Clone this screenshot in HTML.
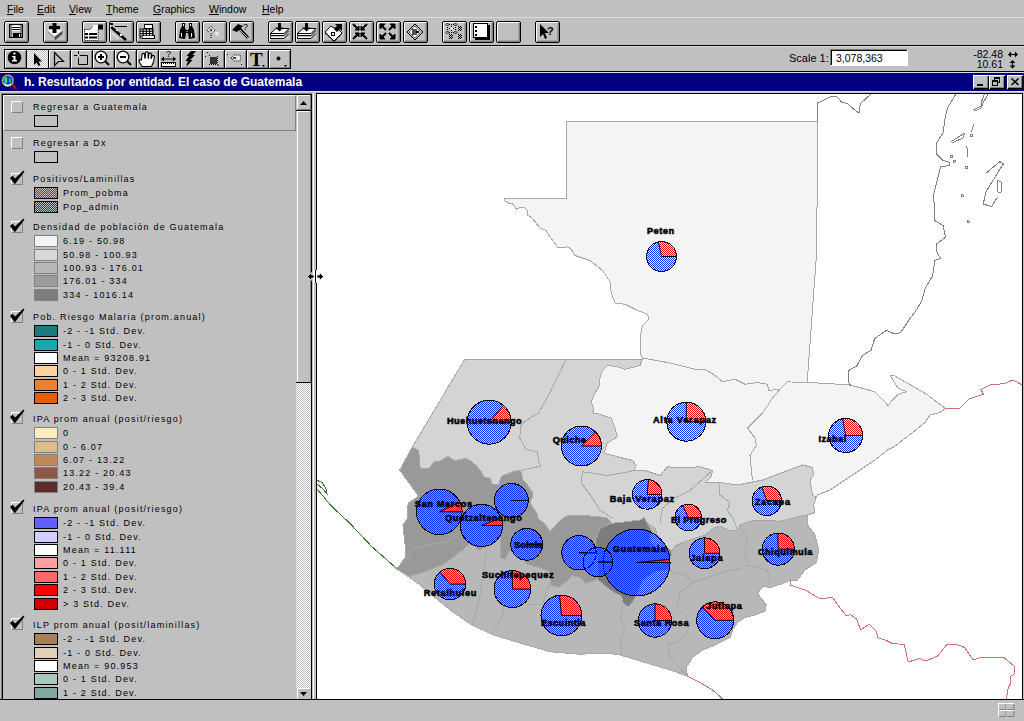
<!DOCTYPE html><html><head><meta charset='utf-8'><style>
*{margin:0;padding:0;box-sizing:border-box}
html,body{width:1024px;height:721px;overflow:hidden;background:#c0c0c0;font-family:"Liberation Sans",sans-serif;position:relative}
.a{position:absolute}
.mi{position:absolute;top:3px;font-size:10.5px;color:#000;white-space:nowrap}
.mi u{text-decoration:underline}
.b1{position:absolute;top:21px;width:25px;height:22px;border:1px solid #000;border-radius:2px;background:#c0c0c0;box-shadow:inset 1px 1px 0 #fff,inset -1px -1px 0 #808080,inset -2px -2px 0 #a0a0a0}
.b2{position:absolute;top:49px;width:23px;height:20px;border:1px solid #000;background:#c0c0c0;box-shadow:inset 1px 1px 0 #fff,inset -1px -1px 0 #808080}
.lt{position:absolute;font-size:9px;letter-spacing:1.2px;white-space:nowrap;color:#000;line-height:12px}
.sw{position:absolute;left:34px;width:25px;height:12px;border:1px solid #000}
.cb{position:absolute;left:11px;width:12px;height:12px;background:#c0c0c0;box-shadow:inset 1px 1px 0 #fff,inset -1px -1px 0 #808080}
</style></head><body><div class='mi' style='left:7px'><u>F</u>ile</div><div class='mi' style='left:37px'><u>E</u>dit</div><div class='mi' style='left:69px'><u>V</u>iew</div><div class='mi' style='left:106px'><u>T</u>heme</div><div class='mi' style='left:153px'><u>G</u>raphics</div><div class='mi' style='left:209px'><u>W</u>indow</div><div class='mi' style='left:262px'><u>H</u>elp</div><div class='a' style='left:0;top:17px;width:1024px;height:1px;background:#dcdcdc'></div><div class='a' style='left:0;top:45px;width:1024px;height:1px;background:#000'></div><div class='a' style='left:0;top:46px;width:1024px;height:1px;background:#dcdcdc'></div><div class='a' style='left:0;top:71px;width:1024px;height:1px;background:#000'></div><div class='a' style='left:0;top:72px;width:1024px;height:1px;background:#dcdcdc'></div><div class='b1' style='left:4px'></div><div class='b1' style='left:43px'></div><div class='b1' style='left:82px'></div><div class='b1' style='left:109px'></div><div class='b1' style='left:136px'></div><div class='b1' style='left:175px'></div><div class='b1' style='left:202px'></div><div class='b1' style='left:229px'></div><div class='b1' style='left:268px'></div><div class='b1' style='left:295px'></div><div class='b1' style='left:322px'></div><div class='b1' style='left:349px'></div><div class='b1' style='left:376px'></div><div class='b1' style='left:403px'></div><div class='b1' style='left:442px'></div><div class='b1' style='left:469px'></div><div class='b1' style='left:496px'></div><div class='b1' style='left:535px'></div><div class='b2' style='left:4px'></div><div class='b2' style='left:26px'></div><div class='b2' style='left:48px'></div><div class='b2' style='left:70px'></div><div class='b2' style='left:92px'></div><div class='b2' style='left:114px'></div><div class='b2' style='left:136px'></div><div class='b2' style='left:158px'></div><div class='b2' style='left:180px'></div><div class='b2' style='left:202px'></div><div class='b2' style='left:224px'></div><div class='b2' style='left:246px'></div><div class='b2' style='left:268px'></div><svg class='a' style='left:0;top:0' width='1024' height='72'><g transform='translate(4,21)'><rect x='5.5' y='3.5' width='13' height='13' fill='#c0c0c0' stroke='#000'/><rect x='6' y='4' width='2' height='12' fill='#808080'/><rect x='16' y='4' width='2' height='12' fill='#808080'/><rect x='8' y='4' width='8' height='6' fill='#fff'/><rect x='8' y='6' width='8' height='1' fill='#000'/><rect x='8' y='8' width='8' height='1' fill='#000'/><rect x='9' y='12' width='8' height='5' fill='#000'/><rect x='15' y='13' width='1' height='3' fill='#fff'/><rect x='5' y='10' width='1' height='1' fill='#000'/></g><g transform='translate(43,21)'><polygon points='4.5,9 19.5,9 19.5,12 12,19 4.5,12' fill='#a8a8a8'/><polygon points='4.5,9 19.5,9 11.5,15.5' fill='#fff'/><polygon points='19.5,10 19.5,13 12,19.5 11.5,16' fill='#505050'/><rect x='9.5' y='2' width='4' height='10' fill='#000'/><rect x='6' y='5' width='11' height='3' fill='#000'/></g><g transform='translate(82,21)'><polygon points='2.5,8.5 8,8.5 11.5,4.5 16,4.5 16,19.5 2.5,19.5' fill='#fff' stroke='#000' stroke-dasharray='1,1'/><rect x='16' y='3.5' width='5' height='5' fill='#000'/><rect x='11' y='4' width='5' height='4' fill='#fff'/><rect x='3' y='12' width='12' height='2' fill='#000'/><rect x='3' y='15.5' width='12' height='2' fill='#000'/><rect x='6' y='11' width='1' height='8' fill='#fff'/></g><g transform='translate(109,21)'><rect x='1' y='2' width='3' height='2' fill='#000'/><line x1='6' y1='5.5' x2='18' y2='5.5' stroke='#000' stroke-width='1'/><line x1='2' y1='6' x2='17' y2='19' stroke='#000' stroke-width='2.6'/><line x1='3' y1='12' x2='9' y2='18' stroke='#fff' stroke-width='1'/><rect x='7' y='9' width='2' height='1' fill='#fff'/><rect x='11' y='13' width='2' height='2' fill='#fff'/></g><g transform='translate(136,21)'><rect x='8.5' y='3.5' width='8' height='4' fill='#fff' stroke='#000'/><rect x='3.5' y='7.5' width='14' height='10' fill='#000'/><rect x='6.5' y='14.5' width='12' height='3' fill='#fff' stroke='#000'/><rect x='4.5' y='8.5' width='2' height='1.2' fill='#fff'/><rect x='7.7' y='8.5' width='2' height='1.2' fill='#fff'/><rect x='10.9' y='8.5' width='2' height='1.2' fill='#fff'/><rect x='14.1' y='8.5' width='2' height='1.2' fill='#fff'/><rect x='4.5' y='10.8' width='2' height='1.2' fill='#fff'/><rect x='7.7' y='10.8' width='2' height='1.2' fill='#fff'/><rect x='10.9' y='10.8' width='2' height='1.2' fill='#fff'/><rect x='14.1' y='10.8' width='2' height='1.2' fill='#fff'/><rect x='4.5' y='13.1' width='2' height='1.2' fill='#fff'/><rect x='7.7' y='13.1' width='2' height='1.2' fill='#fff'/><rect x='10.9' y='13.1' width='2' height='1.2' fill='#fff'/><rect x='14.1' y='13.1' width='2' height='1.2' fill='#fff'/><rect x='4.5' y='15.4' width='2' height='1.2' fill='#fff'/><rect x='7.7' y='15.4' width='2' height='1.2' fill='#fff'/><rect x='10.9' y='15.4' width='2' height='1.2' fill='#fff'/><rect x='14.1' y='15.4' width='2' height='1.2' fill='#fff'/></g><g transform='translate(175,21)'><path d='M4,17 L5,9 L7,5 L7,2 L10,2 L10,7 L11,9 L13,9 L14,7 L14,2 L17,2 L17,5 L19,9 L20,17 L14,18 L13,12 L11,12 L10,18 Z' fill='#000'/><rect x='6' y='12' width='1' height='4' fill='#fff'/><rect x='16' y='12' width='1' height='4' fill='#fff'/><rect x='8' y='3' width='1' height='2' fill='#fff'/><rect x='15' y='3' width='1' height='2' fill='#fff'/><rect x='11.5' y='10' width='1' height='1' fill='#fff'/></g><g transform='translate(202,21)'><polygon points='9,5 13,9 9,13 5,9' fill='#fff' stroke='#000' stroke-dasharray='1,1'/><rect x='7.5' y='7.5' width='3' height='3' fill='#606060'/><rect x='8.5' y='14' width='1' height='1' fill='#000'/><rect x='8.5' y='16' width='1' height='1' fill='#000'/><polygon points='15,10 17.5,12.5 15,15 12.5,12.5' fill='#e8e8e8'/></g><g transform='translate(229,21)'><path d='M3,9 L9,3 L14,5 L12,7 L20,16 L18,18 L10,9 L8,11 Z' fill='#000'/><line x1='11' y1='9' x2='19' y2='17' stroke='#fff' stroke-width='0.8'/><text x='14' y='9' font-family='Liberation Sans' font-size='9' fill='#000'>?</text></g><g transform='translate(268,21)'><polygon points='2.5,12.5 8,7.5 21,7.5 16,12.5' fill='#fff' stroke='#000'/><polyline points='2.5,12.5 2.5,14.5 16,14.5 21,9.5' fill='none' stroke='#000'/><polyline points='2.5,15.5 2.5,17.5 16,17.5 21,12.5' fill='none' stroke='#000'/><rect x='3' y='13' width='13' height='1' fill='#fff'/><rect x='3' y='16' width='13' height='1' fill='#fff'/><rect x='10' y='2' width='3' height='5' fill='#000'/><polygon points='7.5,6.5 15.5,6.5 11.5,10.5' fill='#000'/></g><g transform='translate(295,21)'><polygon points='2.5,12.5 8,7.5 21,7.5 16,12.5' fill='#fff' stroke='#000'/><polyline points='2.5,12.5 2.5,14.5 16,14.5 21,9.5' fill='none' stroke='#000'/><polyline points='2.5,15.5 2.5,17.5 16,17.5 21,12.5' fill='none' stroke='#000'/><rect x='3' y='13' width='13' height='1' fill='#fff'/><rect x='3' y='16' width='13' height='1' fill='#fff'/><rect x='10' y='2' width='3' height='5' fill='#000'/><polygon points='7.5,6.5 15.5,6.5 11.5,10.5' fill='#000'/></g><g transform='translate(322,21)'><polygon points='3,11 9,5 12,7 15,7 20,12 12,20' fill='#fff' stroke='#000'/><polyline points='3,12 12,21 20,13' fill='none' stroke='#000' stroke-dasharray='1,1'/><polygon points='13,3 20,3 20,10 18,8 15,11 12,8 15,5' fill='#000'/><rect x='9' y='11' width='4' height='4' fill='#000'/><rect x='10' y='12' width='2' height='2' fill='#fff'/></g><g transform='translate(349,21)'><path d='M4,3 L10,9 M18,3 L12,9 M4,18 L10,12 M18,18 L12,12' stroke='#000' stroke-width='2'/><path d='M6,9 L10,9 L10,5 Z M16,9 L12,9 L12,5 Z M6,12 L10,12 L10,16 Z M16,12 L12,12 L12,16 Z' fill='#000' stroke='#000'/></g><g transform='translate(376,21)'><path d='M5,4 L10,9 M18,4 L13,9 M5,17 L10,12 M18,17 L13,12' stroke='#000' stroke-width='2'/><path d='M4,3 L9,3 L4,8 Z M19,3 L14,3 L19,8 Z M4,18 L9,18 L4,13 Z M19,18 L14,18 L19,13 Z' fill='#000' stroke='#000'/></g><g transform='translate(403,21)'><polygon points='12,3 20,11 12,19 4,11' fill='none' stroke='#000'/><polygon points='12,5 18,11 12,17 6,11' fill='#fff' stroke='#000' stroke-dasharray='1,1'/><rect x='9' y='8' width='5' height='6' fill='#505050'/><rect x='13' y='10' width='3' height='2' fill='#000'/></g><g transform='translate(442,21)'><polygon points='5.5,2.0 7.0,3.5 5.5,5.0 4.0,3.5' fill='none' stroke='#000' stroke-width='0.9'/><polygon points='13.5,2.0 15.0,3.5 13.5,5.0 12.0,3.5' fill='none' stroke='#000' stroke-width='0.9'/><polygon points='5.5,10.0 7.0,11.5 5.5,13.0 4.0,11.5' fill='none' stroke='#000' stroke-width='0.9'/><polygon points='13.5,10.0 15.0,11.5 13.5,13.0 12.0,11.5' fill='none' stroke='#000' stroke-width='0.9'/><rect x='7' y='3' width='1' height='1' fill='#000'/><rect x='9' y='3' width='1' height='1' fill='#000'/><rect x='11' y='3' width='1' height='1' fill='#000'/><rect x='7' y='11' width='1' height='1' fill='#000'/><rect x='9' y='11' width='1' height='1' fill='#000'/><rect x='11' y='11' width='1' height='1' fill='#000'/><rect x='5' y='6' width='1' height='1' fill='#000'/><rect x='5' y='8' width='1' height='1' fill='#000'/><rect x='13' y='6' width='1' height='1' fill='#000'/><rect x='13' y='8' width='1' height='1' fill='#000'/><rect x='9' y='5' width='1' height='1' fill='#000'/><rect x='7' y='7' width='1' height='1' fill='#000'/><rect x='11' y='7' width='1' height='1' fill='#000'/><rect x='9' y='9' width='1' height='1' fill='#000'/><rect x='8.5' y='6.5' width='2' height='2' fill='#fff'/><rect x='16' y='5' width='1' height='1' fill='#000'/><rect x='18' y='5' width='1' height='1' fill='#000'/><rect x='17' y='6' width='1' height='1' fill='#000'/><rect x='19' y='6' width='1' height='1' fill='#000'/><rect x='16' y='7' width='1' height='1' fill='#000'/><rect x='18' y='7' width='1' height='1' fill='#000'/><rect x='17' y='8' width='1' height='1' fill='#000'/><rect x='19' y='8' width='1' height='1' fill='#000'/><rect x='16' y='9' width='1' height='1' fill='#000'/><rect x='18' y='9' width='1' height='1' fill='#000'/><rect x='7' y='13' width='1' height='1' fill='#000'/><rect x='9' y='13' width='1' height='1' fill='#000'/><rect x='8' y='14' width='1' height='1' fill='#000'/><rect x='10' y='14' width='1' height='1' fill='#000'/><rect x='7' y='15' width='1' height='1' fill='#000'/><rect x='9' y='15' width='1' height='1' fill='#000'/><rect x='8' y='16' width='1' height='1' fill='#000'/><rect x='10' y='16' width='1' height='1' fill='#000'/><rect x='7' y='17' width='1' height='1' fill='#000'/><rect x='9' y='17' width='1' height='1' fill='#000'/><rect x='16' y='13' width='1' height='1' fill='#000'/><rect x='18' y='13' width='1' height='1' fill='#000'/><rect x='17' y='14' width='1' height='1' fill='#000'/><rect x='19' y='14' width='1' height='1' fill='#000'/><rect x='16' y='15' width='1' height='1' fill='#000'/><rect x='18' y='15' width='1' height='1' fill='#000'/><rect x='17' y='16' width='1' height='1' fill='#000'/><rect x='19' y='16' width='1' height='1' fill='#000'/><rect x='16' y='17' width='1' height='1' fill='#000'/><rect x='18' y='17' width='1' height='1' fill='#000'/></g><g transform='translate(469,21)'><rect x='6' y='4' width='15' height='15' fill='#000'/><rect x='4.5' y='2.5' width='14' height='14' fill='#fff' stroke='#000'/><rect x='6' y='5' width='2' height='2' fill='#000'/><rect x='6' y='9' width='2' height='2' fill='#000'/><rect x='6' y='13' width='2' height='2' fill='#000'/></g><g transform='translate(496,21)'></g><g transform='translate(535,21)'><path d='M5,3 L5,16 L8,13 L10,18 L12,17 L10,12 L14,12 Z' fill='#000'/><text x='12' y='14' font-family='Liberation Sans' font-weight='bold' font-size='11' fill='#000'>?</text></g><g transform='translate(4,49)'><circle cx='10.5' cy='8.5' r='6.8' fill='#000'/><rect x='9.5' y='3.5' width='2' height='2' fill='#fff'/><rect x='9.5' y='7' width='2' height='5' fill='#fff'/><rect x='8' y='7' width='2' height='1' fill='#fff'/><rect x='8' y='11' width='5' height='1.5' fill='#fff'/></g><g transform='translate(26,49)'><defs><pattern id='pchk' width='2' height='2' patternUnits='userSpaceOnUse'><rect width='2' height='2' fill='#c0c0c0'/><rect width='1' height='1' fill='#fff'/><rect x='1' y='1' width='1' height='1' fill='#fff'/></pattern></defs><rect x='1' y='1' width='21' height='18' fill='url(#pchk)'/><path d='M8,4 L8,16 L10.5,13.5 L12.5,17 L14.5,16 L12.5,12.5 L16,12.5 Z' fill='#000'/></g><g transform='translate(48,49)'><path d='M6.5,3.5 L6.5,16.5 L10.5,12.5 L15.5,12.5 Z' fill='none' stroke='#000' stroke-width='1.2'/></g><g transform='translate(70,49)'><path d='M8.5,6.5 L17.5,6.5 L17.5,15.5 L8.5,15.5 L8.5,9' fill='none' stroke='#000'/><path d='M8.5,2 L8.5,8 M4,6.5 L12,6.5' stroke='#000' stroke-width='1'/><rect x='7.5' y='5.5' width='2' height='2' fill='#fff'/></g><g transform='translate(92,49)'><circle cx='9' cy='8' r='5.8' fill='#fff' stroke='#000' stroke-width='1.3'/><path d='M6,8 L12,8 M9,5 L9,11' stroke='#000' stroke-width='2'/><path d='M13,12 L17,16' stroke='#000' stroke-width='2.2'/></g><g transform='translate(114,49)'><circle cx='9' cy='8' r='5.8' fill='#fff' stroke='#000' stroke-width='1.3'/><path d='M6,8 L12,8' stroke='#000' stroke-width='2'/><path d='M13,12 L17,16' stroke='#000' stroke-width='2.2'/></g><g transform='translate(136,49)'><path d='M6,17.5 L3,12.5 L3.5,10.5 L5.5,11 L6,5.5 Q7,3.5 8.5,5 L9,9 L9.5,3.5 Q11,2 12,3.5 L12.3,9 L13,4.5 Q14.5,3.5 15.5,5 L15.2,9.5 L16.3,6.5 Q18,6 18.5,7.5 L17.5,13 L15.5,17.5 Z' fill='#fff' stroke='#000' stroke-width='1.1'/><path d='M9,6 L9,10 M12.3,5 L12.3,10 M15.2,6 L15.2,10' stroke='#000' stroke-width='0.9'/></g><g transform='translate(158,49)'><text x='8' y='8' font-family='Liberation Sans' font-size='9' fill='#000'>?</text><path d='M3.5,10 L17.5,10' stroke='#000'/><path d='M3,10 L6,7.5 L6,12.5 Z M18,10 L15,7.5 L15,12.5 Z' fill='#000'/><rect x='3.5' y='13.5' width='14' height='4' fill='#fff' stroke='#000'/><path d='M5.5,14 L5.5,15 M7.5,14 L7.5,15 M9.5,14 L9.5,15 M11.5,14 L11.5,15 M13.5,14 L13.5,15 M15.5,14 L15.5,15' stroke='#000'/></g><g transform='translate(180,49)'><polygon points='11,2 16,2 12.5,6 15,6 10,11 12.5,11 6,18 8,12 5.5,12 9,7 6.5,7' fill='#000'/></g><g transform='translate(202,49)'><rect x='5' y='3' width='1' height='1' fill='#000'/><rect x='3' y='7' width='1' height='1' fill='#000'/><rect x='7' y='6' width='1' height='1' fill='#000'/><rect x='16' y='16' width='1' height='1' fill='#000'/><rect x='7' y='15' width='1' height='1' fill='#000'/><rect x='9' y='15' width='1' height='1' fill='#000'/><rect x='11' y='15' width='1' height='1' fill='#000'/><rect x='13' y='15' width='1' height='1' fill='#000'/><rect x='15' y='15' width='1' height='1' fill='#000'/><rect x='15' y='7' width='1' height='1' fill='#000'/><rect x='15' y='9' width='1' height='1' fill='#000'/><rect x='15' y='11' width='1' height='1' fill='#000'/><rect x='15' y='13' width='1' height='1' fill='#000'/><rect x='8' y='8' width='7' height='7' fill='#303030'/></g><g transform='translate(224,49)'><rect x='3' y='5' width='1' height='1' fill='#000'/><rect x='17' y='15' width='1' height='1' fill='#000'/><polygon points='7,9 10,6 16,6 17,9 16,12 10,12' fill='#e8e8e8' stroke='#000' stroke-dasharray='1,1'/><rect x='9' y='8' width='3' height='2' fill='#404040'/></g><g transform='translate(246,49)'><text x='4' y='17' font-family='Liberation Serif' font-weight='bold' font-size='19' fill='#000'>T</text><path d='M16,16 L19,16 L17.5,18 Z' fill='#000'/></g><g transform='translate(268,49)'><circle cx='10.5' cy='9.5' r='2' fill='#000'/><path d='M16,16 L19,16 L17.5,18 Z' fill='#000'/></g></svg><div class='a' style='left:789px;top:52px;font-size:11px;white-space:nowrap'>Scale 1:</div><div class='a' style='left:830px;top:49px;width:78px;height:17px;background:#fff;border-top:1px solid #808080;border-left:1px solid #808080;border-bottom:1px solid #fff;border-right:1px solid #fff;box-shadow:inset 1px 1px 0 #000'></div><div class='a' style='left:836px;top:52px;font-size:10.5px;white-space:nowrap'>3,078,363</div><div class='a' style='left:972px;top:49px;font-size:10.5px;white-space:nowrap;line-height:10px;text-align:right;width:31px'>-82.48<br>10.61</div><div class='a' style='left:0;top:73px;width:1024px;height:18px;background:#000080'></div><div class='a' style='left:24px;top:75px;font-size:12px;font-weight:bold;color:#fff;white-space:nowrap;line-height:15px'>h. Resultados por entidad. El caso de Guatemala</div><div class='a' style='left:973px;top:75px;width:16px;height:14px;background:#c0c0c0;box-shadow:inset 1px 1px 0 #fff,inset -1px -1px 0 #000,inset -2px -2px 0 #808080'></div><div class='a' style='left:989px;top:75px;width:16px;height:14px;background:#c0c0c0;box-shadow:inset 1px 1px 0 #fff,inset -1px -1px 0 #000,inset -2px -2px 0 #808080'></div><div class='a' style='left:1007px;top:75px;width:16px;height:14px;background:#c0c0c0;box-shadow:inset 1px 1px 0 #fff,inset -1px -1px 0 #000,inset -2px -2px 0 #808080'></div><div class='a' style='left:1px;top:93px;width:311px;height:607px;background:#c0c0c0;border-top:1px solid #808080;border-left:1px solid #808080'></div><div class='a' style='left:2px;top:94px;width:310px;height:606px;border-top:1px solid #000;border-left:1px solid #000;border-bottom:1px solid #000;border-right:1px solid #000'></div><div class='a' style='left:312px;top:93px;width:1px;height:607px;background:#c0c0c0'></div><div class='a' style='left:313px;top:93px;width:1px;height:607px;background:#fff'></div><div class='a' style='left:0;top:91px;width:1024px;height:1px;background:#dfdfdf'></div><div class='a' style='left:3px;top:95px;width:293px;height:36px;border-top:1px solid #fff;border-left:1px solid #fff;border-bottom:1px solid #808080;border-right:1px solid #808080'></div><div class='a' style='left:11px;top:101px;width:12px;height:12px;border-top:1px solid #fff;border-left:1px solid #fff;border-bottom:1px solid #808080;border-right:1px solid #808080'></div><div class='lt' style='left:33px;top:101px'>Regresar a Guatemala</div><div class='a' style='left:34px;top:115px;width:24px;height:12px;border:1px solid #000;background:#c0c0c0'></div><div class='a' style='left:11px;top:137px;width:12px;height:12px;border-top:1px solid #fff;border-left:1px solid #fff;border-bottom:1px solid #808080;border-right:1px solid #808080'></div><div class='lt' style='left:33px;top:137px'>Regresar a Dx</div><div class='a' style='left:34px;top:151px;width:24px;height:12px;border:1px solid #000;background:#c0c0c0'></div><div class='a' style='left:11px;top:173px;width:12px;height:12px;border-top:1px solid #fff;border-left:1px solid #fff;border-bottom:1px solid #808080;border-right:1px solid #808080'></div><svg class='a' style='left:0;top:170px' width='30' height='18'><path d='M10,8 L12.5,5.5 L15,8.5 L23.5,0.5 L24.5,1.5 L15.5,13.5 L14.5,14 Z' fill='#000'/></svg><div class='lt' style='left:33px;top:173px'>Positivos/Laminillas</div><svg class='a' style='left:34px;top:187px' width='24' height='26'><defs><pattern id='lpr' width='2' height='2' patternUnits='userSpaceOnUse'><rect width='2' height='2' fill='#c0c0c0'/><rect width='1' height='1' fill='#ff0000'/><rect x='1' y='1' width='1' height='1' fill='#ff0000'/></pattern><pattern id='lpb' width='2' height='2' patternUnits='userSpaceOnUse'><rect width='2' height='2' fill='#c0c0c0'/><rect width='1' height='1' fill='#0030ff'/><rect x='1' y='1' width='1' height='1' fill='#0030ff'/></pattern></defs><rect x='0.5' y='0.5' width='23' height='11' fill='url(#lpr)' stroke='#000'/><rect x='0.5' y='14.5' width='23' height='11' fill='url(#lpb)' stroke='#000'/></svg><div class='lt' style='left:63px;top:187px'>Prom_pobma</div><div class='lt' style='left:63px;top:201px'>Pop_admin</div><div class='a' style='left:11px;top:221px;width:12px;height:12px;border-top:1px solid #fff;border-left:1px solid #fff;border-bottom:1px solid #808080;border-right:1px solid #808080'></div><svg class='a' style='left:0;top:218px' width='30' height='18'><path d='M10,8 L12.5,5.5 L15,8.5 L23.5,0.5 L24.5,1.5 L15.5,13.5 L14.5,14 Z' fill='#000'/></svg><div class='lt' style='left:33px;top:221px'>Densidad de población de Guatemala</div><div class='a' style='left:34px;top:235px;width:24px;height:12px;border:1px solid #808080;background:#f4f4f4'></div><div class='lt' style='left:63px;top:235px'>6.19 - 50.98</div><div class='a' style='left:34px;top:249px;width:24px;height:12px;border:1px solid #808080;background:#d8d8d8'></div><div class='lt' style='left:63px;top:249px'>50.98 - 100.93</div><div class='a' style='left:34px;top:262px;width:24px;height:12px;border:1px solid #808080;background:#b8b8b8'></div><div class='lt' style='left:63px;top:262px'>100.93 - 176.01</div><div class='a' style='left:34px;top:275px;width:24px;height:12px;border:1px solid #808080;background:#9c9c9c'></div><div class='lt' style='left:63px;top:275px'>176.01 - 334</div><div class='a' style='left:34px;top:289px;width:24px;height:12px;border:1px solid #808080;background:#7c7c7c'></div><div class='lt' style='left:63px;top:289px'>334 - 1016.14</div><div class='a' style='left:11px;top:311px;width:12px;height:12px;border-top:1px solid #fff;border-left:1px solid #fff;border-bottom:1px solid #808080;border-right:1px solid #808080'></div><svg class='a' style='left:0;top:308px' width='30' height='18'><path d='M10,8 L12.5,5.5 L15,8.5 L23.5,0.5 L24.5,1.5 L15.5,13.5 L14.5,14 Z' fill='#000'/></svg><div class='lt' style='left:33px;top:311px'>Pob. Riesgo Malaria (prom.anual)</div><div class='a' style='left:34px;top:325px;width:24px;height:12px;border:1px solid #000;background:#1a7a7e'></div><div class='lt' style='left:63px;top:325px'>-2 - -1 Std. Dev.</div><div class='a' style='left:34px;top:339px;width:24px;height:12px;border:1px solid #000;background:#18a8b0'></div><div class='lt' style='left:63px;top:339px'>-1 - 0 Std. Dev.</div><div class='a' style='left:34px;top:352px;width:24px;height:12px;border:1px solid #000;background:#ffffff'></div><div class='lt' style='left:63px;top:352px'>Mean = 93208.91</div><div class='a' style='left:34px;top:365px;width:24px;height:12px;border:1px solid #000;background:#ffd0a0'></div><div class='lt' style='left:63px;top:365px'>0 - 1 Std. Dev.</div><div class='a' style='left:34px;top:379px;width:24px;height:12px;border:1px solid #000;background:#e88030'></div><div class='lt' style='left:63px;top:379px'>1 - 2 Std. Dev.</div><div class='a' style='left:34px;top:392px;width:24px;height:12px;border:1px solid #000;background:#e06010'></div><div class='lt' style='left:63px;top:392px'>2 - 3 Std. Dev.</div><div class='a' style='left:11px;top:412px;width:12px;height:12px;border-top:1px solid #fff;border-left:1px solid #fff;border-bottom:1px solid #808080;border-right:1px solid #808080'></div><svg class='a' style='left:0;top:409px' width='30' height='18'><path d='M10,8 L12.5,5.5 L15,8.5 L23.5,0.5 L24.5,1.5 L15.5,13.5 L14.5,14 Z' fill='#000'/></svg><div class='lt' style='left:33px;top:413px'>IPA prom anual (posit/riesgo)</div><div class='a' style='left:34px;top:427px;width:24px;height:12px;border:1px solid #808080;background:#ffecc0'></div><div class='lt' style='left:63px;top:427px'>0</div><div class='a' style='left:34px;top:441px;width:24px;height:12px;border:1px solid #808080;background:#e0bc88'></div><div class='lt' style='left:63px;top:441px'>0 - 6.07</div><div class='a' style='left:34px;top:454px;width:24px;height:12px;border:1px solid #808080;background:#c08858'></div><div class='lt' style='left:63px;top:454px'>6.07 - 13.22</div><div class='a' style='left:34px;top:467px;width:24px;height:12px;border:1px solid #808080;background:#8c5848'></div><div class='lt' style='left:63px;top:467px'>13.22 - 20.43</div><div class='a' style='left:34px;top:481px;width:24px;height:12px;border:1px solid #808080;background:#5c2c2c'></div><div class='lt' style='left:63px;top:481px'>20.43 - 39.4</div><div class='a' style='left:11px;top:502px;width:12px;height:12px;border-top:1px solid #fff;border-left:1px solid #fff;border-bottom:1px solid #808080;border-right:1px solid #808080'></div><svg class='a' style='left:0;top:499px' width='30' height='18'><path d='M10,8 L12.5,5.5 L15,8.5 L23.5,0.5 L24.5,1.5 L15.5,13.5 L14.5,14 Z' fill='#000'/></svg><div class='lt' style='left:33px;top:503px'>IPA prom anual (posit/riesgo)</div><div class='a' style='left:34px;top:517px;width:24px;height:12px;border:1px solid #000;background:#6060ff'></div><div class='lt' style='left:63px;top:517px'>-2 - -1 Std. Dev.</div><div class='a' style='left:34px;top:531px;width:24px;height:12px;border:1px solid #000;background:#d0d0ff'></div><div class='lt' style='left:63px;top:531px'>-1 - 0 Std. Dev.</div><div class='a' style='left:34px;top:544px;width:24px;height:12px;border:1px solid #000;background:#ffffff'></div><div class='lt' style='left:63px;top:544px'>Mean = 11.111</div><div class='a' style='left:34px;top:557px;width:24px;height:12px;border:1px solid #000;background:#ffa0a0'></div><div class='lt' style='left:63px;top:557px'>0 - 1 Std. Dev.</div><div class='a' style='left:34px;top:571px;width:24px;height:12px;border:1px solid #000;background:#ff6868'></div><div class='lt' style='left:63px;top:571px'>1 - 2 Std. Dev.</div><div class='a' style='left:34px;top:584px;width:24px;height:12px;border:1px solid #000;background:#ff0000'></div><div class='lt' style='left:63px;top:584px'>2 - 3 Std. Dev.</div><div class='a' style='left:34px;top:598px;width:24px;height:12px;border:1px solid #000;background:#d00000'></div><div class='lt' style='left:63px;top:598px'>&gt; 3 Std. Dev.</div><div class='a' style='left:11px;top:618px;width:12px;height:12px;border-top:1px solid #fff;border-left:1px solid #fff;border-bottom:1px solid #808080;border-right:1px solid #808080'></div><svg class='a' style='left:0;top:615px' width='30' height='18'><path d='M10,8 L12.5,5.5 L15,8.5 L23.5,0.5 L24.5,1.5 L15.5,13.5 L14.5,14 Z' fill='#000'/></svg><div class='lt' style='left:33px;top:619px'>ILP prom anual (posit/laminillas)</div><div class='a' style='left:34px;top:633px;width:24px;height:12px;border:1px solid #000;background:#a88058'></div><div class='lt' style='left:63px;top:633px'>-2 - -1 Std. Dev.</div><div class='a' style='left:34px;top:647px;width:24px;height:12px;border:1px solid #000;background:#e0d0b8'></div><div class='lt' style='left:63px;top:647px'>-1 - 0 Std. Dev.</div><div class='a' style='left:34px;top:660px;width:24px;height:12px;border:1px solid #000;background:#ffffff'></div><div class='lt' style='left:63px;top:660px'>Mean = 90.953</div><div class='a' style='left:34px;top:673px;width:24px;height:12px;border:1px solid #000;background:#a8c8c0'></div><div class='lt' style='left:63px;top:673px'>0 - 1 Std. Dev.</div><div class='a' style='left:34px;top:687px;width:24px;height:12px;border:1px solid #000;background:#80a8a0'></div><div class='lt' style='left:63px;top:687px'>1 - 2 Std. Dev.</div><div class='a' style='left:0;top:699px;width:1024px;height:1px;background:#000'></div><div class='a' style='left:0;top:700px;width:1024px;height:21px;background:#c0c0c0'></div><svg class='a' style='left:296px;top:95px' width='16' height='604'><defs><pattern id='chk' width='2' height='2' patternUnits='userSpaceOnUse'><rect width='2' height='2' fill='#c0c0c0'/><rect width='1' height='1' fill='#fff'/><rect x='1' y='1' width='1' height='1' fill='#fff'/></pattern></defs><rect x='0' y='0' width='16' height='604' fill='url(#chk)'/><rect x='0' y='0' width='15' height='16' fill='#c0c0c0'/><rect x='1' y='0' width='13' height='1' fill='#fff'/><rect x='1' y='0' width='1' height='15' fill='#fff'/><rect x='1' y='14' width='13' height='1' fill='#808080'/><rect x='0' y='15' width='15' height='1' fill='#000'/><rect x='14' y='0' width='1' height='15' fill='#808080'/><path d='M4,10 L11,10 L7.5,6 Z' fill='#000'/><rect x='0' y='16' width='15' height='271' fill='#c0c0c0'/><rect x='1' y='16' width='1' height='271' fill='#fff'/><rect x='1' y='16' width='13' height='1' fill='#fff'/><rect x='0' y='287' width='15' height='1' fill='#000'/><rect x='14' y='16' width='1' height='271' fill='#808080'/><rect x='0' y='593' width='15' height='11' fill='#c0c0c0'/><rect x='1' y='593' width='13' height='1' fill='#fff'/><rect x='1' y='593' width='1' height='11' fill='#fff'/><path d='M4,597 L11,597 L7.5,601 Z' fill='#000'/><rect x='15' y='0' width='1' height='604' fill='#000'/></svg><div class='a' style='left:316px;top:93px;width:707px;height:607px;border:1px solid #000;background:#fff'></div><svg class='a' style='left:0;top:0' width='1024' height='721' viewBox='0 0 1024 721'><defs><clipPath id='mc'><rect x='317' y='94' width='705' height='605'/></clipPath><pattern id='pb' width='2' height='2' patternUnits='userSpaceOnUse'><rect width='1' height='1' fill='#0030ff'/><rect x='1' y='1' width='1' height='1' fill='#0030ff'/></pattern><pattern id='pr' width='2' height='2' patternUnits='userSpaceOnUse'><rect width='1' height='1' fill='#ff0000'/><rect x='1' y='1' width='1' height='1' fill='#ff0000'/></pattern></defs><g clip-path='url(#mc)'><g shape-rendering='crispEdges' stroke-linejoin='round'><polygon points='566.50,121.25 817.80,121.40 816.60,253.00 807.20,382.40 848.60,384.80 862.70,388.30 874.60,391.80 888.70,406.00 891.00,401.30 898.20,394.20 906.50,391.80 898.20,388.30 890.00,375.30 893.50,375.30 926.60,394.20 945.50,408.40 940.00,412.50 930.00,415.00 925.00,422.50 912.50,432.50 895.00,446.25 887.50,450.00 875.00,460.00 860.00,470.00 845.00,480.00 830.00,490.00 817.50,495.00 816.25,497.50 813.75,505.00 815.00,512.50 807.50,515.00 807.50,525.00 815.00,535.00 817.50,545.00 818.75,550.00 816.25,562.50 805.00,570.00 797.50,580.00 790.00,580.00 782.50,583.75 770.00,587.50 763.75,586.25 760.00,590.00 757.50,593.75 762.50,600.00 766.25,605.00 765.00,611.25 755.00,615.00 745.00,617.50 737.50,622.50 732.50,630.00 730.00,637.50 715.00,645.00 702.50,650.00 692.50,657.50 686.25,667.50 687.50,676.25 670.00,670.00 645.00,662.50 620.00,655.00 605.00,653.00 580.00,654.25 550.00,651.75 520.00,643.00 495.00,635.50 472.50,625.50 452.50,611.75 432.50,595.50 417.50,583.00 405.00,574.25 394.60,567.90 398.70,566.80 406.00,556.40 405.00,544.00 402.90,525.20 407.00,519.00 408.10,503.40 418.50,496.10 399.75,470.10 412.20,447.30 464.75,359.25 642.50,359.25 642.50,358.00 640.00,353.00 640.00,338.00 642.50,325.50 648.75,319.25 647.50,314.25 635.00,309.25 625.00,304.25 615.00,303.00 611.25,293.00 610.00,281.75 602.50,270.50 590.00,260.50 575.00,255.50 571.25,249.25 567.50,246.75 565.00,248.00 557.25,247.50 554.75,243.00 549.75,236.75 546.00,230.50 539.75,228.00 536.00,223.00 532.25,218.00 528.00,215.50 527.25,210.50 524.75,208.00 519.75,207.50 516.00,209.25 513.50,204.25 508.50,203.00 504.00,200.50 504.00,198.00 566.50,198.00' fill='#b8b8b8' stroke='#a8a8a8' stroke-width='1'/><polygon points='566.50,121.25 817.80,121.40 816.60,253.00 807.20,382.40 848.60,384.80 862.70,388.30 874.60,391.80 888.70,406.00 891.00,401.30 898.20,394.20 906.50,391.80 898.20,388.30 890.00,375.30 893.50,375.30 926.60,394.20 945.50,408.40 940.00,412.50 930.00,415.00 925.00,422.50 912.50,432.50 895.00,446.25 887.50,450.00 875.00,460.00 860.00,470.00 845.00,480.00 830.00,490.00 817.50,495.00 807.50,515.00 815.00,512.50 813.75,505.00 816.25,497.50 812.50,495.00 810.00,480.00 813.75,475.00 812.50,467.50 802.50,465.00 782.50,472.50 762.50,480.00 737.50,485.00 718.75,482.50 705.00,483.00 711.25,476.75 712.50,470.50 700.00,466.75 680.00,468.00 667.50,466.75 660.00,475.50 645.00,470.50 633.75,470.50 636.25,465.50 632.50,460.50 617.50,456.75 603.75,453.00 607.50,443.00 617.50,436.75 615.00,428.00 611.25,418.00 600.00,414.25 592.50,413.00 593.75,409.25 591.25,401.75 595.00,393.00 598.75,388.00 600.00,378.00 602.50,370.50 607.50,365.50 617.50,366.75 625.00,369.25 640.00,365.50 642.50,358.00 642.50,358.00 640.00,353.00 640.00,338.00 642.50,325.50 648.75,319.25 647.50,314.25 635.00,309.25 625.00,304.25 615.00,303.00 611.25,293.00 610.00,281.75 602.50,270.50 590.00,260.50 575.00,255.50 571.25,249.25 567.50,246.75 565.00,248.00 557.25,247.50 554.75,243.00 549.75,236.75 546.00,230.50 539.75,228.00 536.00,223.00 532.25,218.00 528.00,215.50 527.25,210.50 524.75,208.00 519.75,207.50 516.00,209.25 513.50,204.25 508.50,203.00 504.00,200.50 504.00,198.00 566.50,198.00' fill='#f4f4f4' stroke='#a8a8a8' stroke-width='1'/><polygon points='464.75,359.25 642.50,359.25 642.50,358.00 640.00,365.50 625.00,369.25 617.50,366.75 607.50,365.50 602.50,370.50 600.00,378.00 598.75,388.00 595.00,393.00 591.25,401.75 593.75,409.25 592.50,413.00 600.00,414.25 611.25,418.00 615.00,428.00 617.50,436.75 607.50,443.00 603.75,453.00 617.50,456.75 632.50,460.50 636.25,465.50 633.75,470.50 645.00,470.50 660.00,475.50 667.50,466.75 680.00,468.00 700.00,466.75 712.50,470.50 711.25,476.75 705.00,483.00 718.75,482.50 737.50,485.00 762.50,480.00 782.50,472.50 802.50,465.00 812.50,467.50 813.75,475.00 810.00,480.00 812.50,495.00 816.25,497.50 813.75,505.00 815.00,512.50 807.50,515.00 795.00,517.50 780.00,521.25 760.00,520.00 750.00,521.25 740.00,525.00 737.50,530.00 727.50,530.00 720.00,526.25 715.00,527.50 705.00,535.00 697.50,537.50 682.50,542.50 675.00,546.25 670.00,554.25 665.00,548.00 656.70,533.30 655.00,528.30 646.70,522.50 644.20,517.50 640.00,520.00 626.70,521.70 611.70,523.30 606.70,517.50 585.00,515.50 570.00,515.00 564.40,517.20 558.90,521.70 553.30,528.30 550.00,531.70 547.80,528.30 545.60,525.00 542.20,521.70 537.80,518.30 536.70,512.80 533.30,508.30 530.00,502.80 532.80,496.10 532.20,491.70 528.90,487.20 526.70,483.90 523.30,480.60 521.70,475.00 520.60,470.60 514.40,471.10 507.80,473.90 502.20,475.60 500.00,480.60 498.90,485.00 492.20,483.90 490.00,478.30 484.40,477.20 481.10,471.70 476.70,466.10 471.00,461.10 465.50,458.40 454.60,460.70 448.30,456.40 439.75,461.10 435.00,461.50 428.80,468.10 420.20,468.10 418.70,450.20 412.20,447.30' fill='#d4d4d4' stroke='#a8a8a8' stroke-width='1'/><polygon points='412.20,447.30 418.70,450.20 420.20,468.10 428.80,468.10 435.00,461.50 439.75,461.10 448.30,456.40 454.60,460.70 465.50,458.40 471.00,461.10 476.70,466.10 481.10,471.70 484.40,477.20 490.00,478.30 492.20,483.90 498.90,485.00 500.00,480.60 502.20,475.60 507.80,473.90 514.40,471.10 520.60,470.60 521.70,475.00 523.30,480.60 526.70,483.90 528.90,487.20 532.20,491.70 532.80,496.10 530.00,502.80 533.30,508.30 536.70,512.80 537.80,518.30 542.20,521.70 545.60,525.00 547.80,528.30 550.00,531.70 553.30,528.30 558.90,521.70 564.40,517.20 570.00,515.00 585.00,515.50 606.70,517.50 611.70,523.30 600.00,528.30 597.50,535.80 595.00,540.00 597.50,560.00 597.50,579.50 585.80,583.40 580.00,577.60 572.10,575.60 566.25,581.50 558.40,587.30 550.60,585.40 550.00,571.75 540.00,568.00 527.50,564.25 510.00,550.50 505.00,559.25 500.00,558.00 500.00,538.00 490.00,543.00 480.00,550.50 470.00,543.00 462.50,550.50 459.00,552.30 450.70,559.50 442.40,564.70 432.00,568.90 421.60,573.00 409.10,576.20 394.60,567.90 398.70,566.80 406.00,556.40 405.00,544.00 402.90,525.20 407.00,519.00 408.10,503.40 418.50,496.10 399.75,470.10' fill='#999999' stroke='#a8a8a8' stroke-width='1'/><polygon points='611.70,523.30 626.70,521.70 640.00,520.00 644.20,517.50 646.70,522.50 652.00,531.00 650.00,540.00 656.00,547.00 666.00,547.00 672.00,551.00 671.00,556.00 669.00,561.00 670.00,568.70 654.70,572.40 648.40,576.20 643.40,580.00 639.70,587.40 637.20,594.90 633.50,600.00 631.00,604.00 628.30,607.00 623.30,603.30 621.70,596.70 610.00,590.00 597.50,579.50 597.50,560.00 595.00,540.00 597.50,535.80 600.00,528.30' fill='#7c7c7c' stroke='#a8a8a8' stroke-width='1'/><polyline points='642.50,358.00 670.00,363.00 695.00,369.25 705.00,369.25 715.00,375.50 722.50,381.75 735.00,379.25 745.00,384.25 757.50,382.50 767.50,384.25 768.75,390.50 780.00,389.25 787.50,381.75 807.20,383.00' fill='none' stroke='#a8a8a8' stroke-width='1'/><polyline points='780.00,389.25 772.50,398.00 762.50,413.00 760.00,415.50 747.50,428.00 755.00,438.00 756.25,445.50 750.00,455.50 751.25,468.00 752.50,480.50' fill='none' stroke='#a8a8a8' stroke-width='1'/><polyline points='566.00,359.25 551.00,390.50 538.50,413.00 526.00,420.50 521.00,425.50 519.75,438.00 526.00,449.25 537.25,451.75 538.90,461.70 541.10,466.10 530.00,468.30 520.60,470.60' fill='none' stroke='#a8a8a8' stroke-width='1'/><polyline points='633.75,470.50 622.50,473.00 607.50,475.50 582.50,471.75 581.25,483.00 592.50,498.00 600.00,510.50 612.50,518.00' fill='none' stroke='#a8a8a8' stroke-width='1'/><polyline points='712.50,470.50 690.00,490.50 675.00,498.00 662.50,508.00 660.00,523.00' fill='none' stroke='#a8a8a8' stroke-width='1'/><polyline points='718.75,482.50 720.00,495.00 730.00,502.50 727.50,510.00 733.75,520.00 737.50,530.00' fill='none' stroke='#a8a8a8' stroke-width='1'/><polyline points='487.50,545.50 480.00,595.50 472.50,625.50' fill='none' stroke='#a8a8a8' stroke-width='1'/><polyline points='550.60,581.50 544.80,595.20 542.80,604.90 525.20,603.90 503.75,606.90 501.80,618.60 494.00,630.30 492.00,636.20' fill='none' stroke='#a8a8a8' stroke-width='1'/><polyline points='623.00,605.00 620.50,617.70 624.50,629.40 620.50,640.00 622.00,655.00' fill='none' stroke='#a8a8a8' stroke-width='1'/><polyline points='692.50,582.50 680.00,592.50 677.50,607.50 685.00,615.00 690.00,625.00 685.00,635.00 677.50,642.50 667.50,645.00 670.00,657.50 687.50,676.25' fill='none' stroke='#a8a8a8' stroke-width='1'/><polyline points='666.70,566.70 673.30,572.70 685.00,574.70 692.80,582.50 706.50,578.60 716.25,574.70 728.00,570.80 739.70,568.80 747.50,564.90 755.30,566.90 767.50,570.00 770.00,582.50' fill='none' stroke='#a8a8a8' stroke-width='1'/><polyline points='747.50,564.90 745.00,552.50 747.50,540.00 740.00,525.00' fill='none' stroke='#a8a8a8' stroke-width='1'/><polyline points='407.00,558.50 413.30,548.10 434.00,544.00 446.50,541.90 457.00,536.70' fill='none' stroke='#a8a8a8' stroke-width='1'/><polyline points='817.80,121.40 817.80,102.50 819.00,102.50 830.80,96.50 836.70,96.50 841.50,102.00 847.40,103.60 851.00,107.00 859.00,113.00 860.40,103.60 871.00,94.00' fill='none' stroke='#808080' stroke-width='1'/><polyline points='956.00,94.00 947.80,107.20 945.50,115.50 943.00,133.00 936.00,143.80 936.00,153.30 943.00,160.40 950.00,162.70 949.00,165.80 940.70,166.30 933.70,194.60 934.90,220.70 943.00,225.40 945.50,237.20 936.00,244.30 937.20,253.00 940.70,258.30 934.80,260.60 932.50,276.00 925.40,287.80 921.80,300.80 917.00,309.00 910.00,318.60 900.60,332.70 894.70,334.00 886.40,330.40 874.60,338.60 871.00,350.50 862.70,355.20 856.80,365.80 848.60,370.60 848.60,382.40 851.00,386.00' fill='none' stroke='#808080' stroke-width='1'/><polyline points='984.50,94.00 982.10,100.00 981.00,106.00 973.90,109.50 975.00,110.70 981.00,108.40 983.30,102.50 988.00,94.20' fill='none' stroke='#808080' stroke-width='1'/><polyline points='951.40,141.50 964.40,133.20 963.20,137.90 952.60,142.60 951.40,141.50' fill='none' stroke='#808080' stroke-width='1'/><polyline points='985.70,173.40 999.90,161.60 1003.40,164.00 998.70,171.00 985.70,192.30 983.30,204.10 991.60,206.50 997.50,197.00' fill='none' stroke='#808080' stroke-width='1'/><polyline points='997.50,180.50 1001.00,182.00 1001.00,192.30 997.50,192.00 997.50,180.50' fill='none' stroke='#808080' stroke-width='1'/><polyline points='973.90,123.70 971.50,132.00' fill='none' stroke='#808080' stroke-width='1'/><polyline points='966.80,146.20 968.00,156.80' fill='none' stroke='#808080' stroke-width='1'/><rect x='950.4' y='155.8' width='2' height='2' fill='none' stroke='#808080' stroke-width='1'/><rect x='965.8' y='166.5' width='2' height='2' fill='none' stroke='#808080' stroke-width='1'/><rect x='961.0' y='194.8' width='2' height='2' fill='none' stroke='#808080' stroke-width='1'/><rect x='967.0' y='220.8' width='2' height='2' fill='none' stroke='#808080' stroke-width='1'/><rect x='970.5' y='134.6' width='2' height='2' fill='none' stroke='#808080' stroke-width='1'/><rect x='953.0' y='160.0' width='2' height='2' fill='none' stroke='#808080' stroke-width='1'/><polyline points='317.40,489.40 331.30,506.00 349.30,522.70 371.50,546.30 395.00,567.10' fill='none' stroke='#3a7a2a' stroke-width='1'/><polyline points='317.00,480.40 322.20,482.50 325.70,488.00 327.10,494.30 323.60,489.40 317.00,484.00' fill='none' stroke='#3a7a2a' stroke-width='1'/><polyline points='945.50,408.40 959.70,408.40 969.00,399.00 983.30,394.20 981.00,389.50 990.40,384.80 1004.60,383.60 1012.90,380.00 1022.00,384.80' fill='none' stroke='#d07070' stroke-width='1'/><polyline points='790.00,580.00 790.00,585.00 805.00,590.00 820.00,598.75 832.50,597.50 838.75,606.25 846.00,615.40 850.90,614.80 856.70,619.20 860.60,629.90 869.30,624.10 876.10,630.90 878.00,637.70 886.80,640.60 892.60,643.50 904.30,644.50 908.20,662.00 919.80,658.50 925.60,661.00 937.30,656.20 947.00,644.50 956.70,644.50 964.50,647.40 973.20,660.00 982.00,657.10 1003.30,657.10 1015.00,666.80 1014.00,674.60 1010.10,676.60 1010.10,684.30 1008.20,688.20 1006.30,698.90' fill='none' stroke='#d07070' stroke-width='1'/><polyline points='687.50,676.25 700.00,682.50 712.50,690.00 722.50,698.75' fill='none' stroke='#d07070' stroke-width='1'/></g><circle cx='661.5' cy='256.5' r='15' fill='url(#pb)'/><path d='M661.5,256.5 L676.50,256.50 A15,15 0 0 0 658.38,241.83 Z' fill='url(#pr)'/><circle cx='661.5' cy='256.5' r='15' fill='none' stroke='#000' stroke-width='1' shape-rendering='crispEdges'/><path d='M676.50,256.50 L661.5,256.5 L658.38,241.83' fill='none' stroke='#000' stroke-width='1'/><circle cx='489.2' cy='422.2' r='22' fill='url(#pb)'/><path d='M489.2,422.2 L511.20,422.20 A22,22 0 0 0 503.34,405.35 Z' fill='url(#pr)'/><circle cx='489.2' cy='422.2' r='22' fill='none' stroke='#000' stroke-width='1' shape-rendering='crispEdges'/><path d='M511.20,422.20 L489.2,422.2 L503.34,405.35' fill='none' stroke='#000' stroke-width='1'/><circle cx='581.4' cy='446' r='20' fill='url(#pb)'/><path d='M581.4,446 L601.40,446.00 A20,20 0 0 0 595.54,431.86 Z' fill='url(#pr)'/><circle cx='581.4' cy='446' r='20' fill='none' stroke='#000' stroke-width='1' shape-rendering='crispEdges'/><path d='M601.40,446.00 L581.4,446 L595.54,431.86' fill='none' stroke='#000' stroke-width='1'/><circle cx='686.3' cy='421.7' r='19.5' fill='url(#pb)'/><path d='M686.3,421.7 L705.80,421.70 A19.5,19.5 0 0 0 686.30,402.20 Z' fill='url(#pr)'/><circle cx='686.3' cy='421.7' r='19.5' fill='none' stroke='#000' stroke-width='1' shape-rendering='crispEdges'/><path d='M705.80,421.70 L686.3,421.7 L686.30,402.20' fill='none' stroke='#000' stroke-width='1'/><circle cx='845.6' cy='435.5' r='17' fill='url(#pb)'/><path d='M845.6,435.5 L862.60,435.50 A17,17 0 0 0 842.65,418.76 Z' fill='url(#pr)'/><circle cx='845.6' cy='435.5' r='17' fill='none' stroke='#000' stroke-width='1' shape-rendering='crispEdges'/><path d='M862.60,435.50 L845.6,435.5 L842.65,418.76' fill='none' stroke='#000' stroke-width='1'/><circle cx='647.2' cy='494.4' r='14.8' fill='url(#pb)'/><path d='M647.2,494.4 L662.00,494.40 A14.8,14.8 0 0 0 648.49,479.66 Z' fill='url(#pr)'/><circle cx='647.2' cy='494.4' r='14.8' fill='none' stroke='#000' stroke-width='1' shape-rendering='crispEdges'/><path d='M662.00,494.40 L647.2,494.4 L648.49,479.66' fill='none' stroke='#000' stroke-width='1'/><circle cx='688.3' cy='517.5' r='13.3' fill='url(#pb)'/><path d='M688.3,517.5 L701.60,517.50 A13.3,13.3 0 0 0 682.68,505.45 Z' fill='url(#pr)'/><circle cx='688.3' cy='517.5' r='13.3' fill='none' stroke='#000' stroke-width='1' shape-rendering='crispEdges'/><path d='M701.60,517.50 L688.3,517.5 L682.68,505.45' fill='none' stroke='#000' stroke-width='1'/><circle cx='766.8' cy='500.8' r='14.7' fill='url(#pb)'/><path d='M766.8,500.8 L781.50,500.80 A14.7,14.7 0 0 0 761.77,486.99 Z' fill='url(#pr)'/><circle cx='766.8' cy='500.8' r='14.7' fill='none' stroke='#000' stroke-width='1' shape-rendering='crispEdges'/><path d='M781.50,500.80 L766.8,500.8 L761.77,486.99' fill='none' stroke='#000' stroke-width='1'/><circle cx='704.6' cy='553.3' r='15.4' fill='url(#pb)'/><path d='M704.6,553.3 L720.00,553.30 A15.4,15.4 0 0 0 704.60,537.90 Z' fill='url(#pr)'/><circle cx='704.6' cy='553.3' r='15.4' fill='none' stroke='#000' stroke-width='1' shape-rendering='crispEdges'/><path d='M720.00,553.30 L704.6,553.3 L704.60,537.90' fill='none' stroke='#000' stroke-width='1'/><circle cx='778.3' cy='549.1' r='16.1' fill='url(#pb)'/><path d='M778.3,549.1 L794.40,549.10 A16.1,16.1 0 0 0 777.74,533.01 Z' fill='url(#pr)'/><circle cx='778.3' cy='549.1' r='16.1' fill='none' stroke='#000' stroke-width='1' shape-rendering='crispEdges'/><path d='M794.40,549.10 L778.3,549.1 L777.74,533.01' fill='none' stroke='#000' stroke-width='1'/><circle cx='439.3' cy='511.8' r='22.8' fill='url(#pb)'/><path d='M439.3,511.8 L462.10,511.80 A22.8,22.8 0 0 0 459.79,501.81 Z' fill='url(#pr)'/><circle cx='439.3' cy='511.8' r='22.8' fill='none' stroke='#000' stroke-width='1' shape-rendering='crispEdges'/><path d='M462.10,511.80 L439.3,511.8 L459.79,501.81' fill='none' stroke='#000' stroke-width='1'/><circle cx='511.4' cy='500.5' r='17' fill='url(#pb)'/><path d='M511.4,500.5 L528.40,500.50 A17,17 0 0 0 528.40,500.35 Z' fill='url(#pr)'/><circle cx='511.4' cy='500.5' r='17' fill='none' stroke='#000' stroke-width='1' shape-rendering='crispEdges'/><path d='M528.40,500.50 L511.4,500.5 L528.40,500.35' fill='none' stroke='#000' stroke-width='1'/><circle cx='481.5' cy='525.5' r='21.1' fill='url(#pb)'/><path d='M481.5,525.5 L502.60,525.50 A21.1,21.1 0 0 0 501.06,517.60 Z' fill='url(#pr)'/><circle cx='481.5' cy='525.5' r='21.1' fill='none' stroke='#000' stroke-width='1' shape-rendering='crispEdges'/><path d='M502.60,525.50 L481.5,525.5 L501.06,517.60' fill='none' stroke='#000' stroke-width='1'/><circle cx='526.7' cy='544.3' r='15.9' fill='url(#pb)'/><circle cx='526.7' cy='544.3' r='15.9' fill='none' stroke='#000' stroke-width='1' shape-rendering='crispEdges'/><path d='M542.60,544.30 L526.7,544.3 L542.60,544.30' fill='none' stroke='#000' stroke-width='1'/><circle cx='450' cy='584.1' r='15.7' fill='url(#pb)'/><path d='M450,584.1 L465.70,584.10 A15.7,15.7 0 0 0 439.91,572.07 Z' fill='url(#pr)'/><circle cx='450' cy='584.1' r='15.7' fill='none' stroke='#000' stroke-width='1' shape-rendering='crispEdges'/><path d='M465.70,584.10 L450,584.1 L439.91,572.07' fill='none' stroke='#000' stroke-width='1'/><circle cx='512.4' cy='589.1' r='18.4' fill='url(#pb)'/><path d='M512.4,589.1 L530.80,589.10 A18.4,18.4 0 0 0 512.40,570.70 Z' fill='url(#pr)'/><circle cx='512.4' cy='589.1' r='18.4' fill='none' stroke='#000' stroke-width='1' shape-rendering='crispEdges'/><path d='M530.80,589.10 L512.4,589.1 L512.40,570.70' fill='none' stroke='#000' stroke-width='1'/><circle cx='561.4' cy='615.5' r='20.4' fill='url(#pb)'/><path d='M561.4,615.5 L581.80,615.50 A20.4,20.4 0 0 0 559.62,595.18 Z' fill='url(#pr)'/><circle cx='561.4' cy='615.5' r='20.4' fill='none' stroke='#000' stroke-width='1' shape-rendering='crispEdges'/><path d='M581.80,615.50 L561.4,615.5 L559.62,595.18' fill='none' stroke='#000' stroke-width='1'/><circle cx='636.6' cy='562.5' r='33.5' fill='url(#pb)'/><path d='M636.6,562.5 L670.10,562.50 A33.5,33.5 0 0 0 669.95,559.29 Z' fill='url(#pr)'/><circle cx='636.6' cy='562.5' r='33.5' fill='none' stroke='#000' stroke-width='1' shape-rendering='crispEdges'/><path d='M670.10,562.50 L636.6,562.5 L669.95,559.29' fill='none' stroke='#000' stroke-width='1'/><circle cx='579' cy='552.8' r='17.2' fill='url(#pb)'/><circle cx='579' cy='552.8' r='17.2' fill='none' stroke='#000' stroke-width='1' shape-rendering='crispEdges'/><path d='M596.20,552.80 L579,552.8 L596.20,552.80' fill='none' stroke='#000' stroke-width='1'/><circle cx='597.9' cy='562.1' r='14.8' fill='url(#pb)'/><circle cx='597.9' cy='562.1' r='14.8' fill='none' stroke='#000' stroke-width='1' shape-rendering='crispEdges'/><path d='M612.70,562.10 L597.9,562.1 L612.70,562.10' fill='none' stroke='#000' stroke-width='1'/><circle cx='655' cy='620.5' r='16.7' fill='url(#pb)'/><path d='M655,620.5 L671.70,620.50 A16.7,16.7 0 0 0 655.00,603.80 Z' fill='url(#pr)'/><circle cx='655' cy='620.5' r='16.7' fill='none' stroke='#000' stroke-width='1' shape-rendering='crispEdges'/><path d='M671.70,620.50 L655,620.5 L655.00,603.80' fill='none' stroke='#000' stroke-width='1'/><circle cx='715.2' cy='620.3' r='18.5' fill='url(#pb)'/><path d='M715.2,620.3 L733.70,620.30 A18.5,18.5 0 0 0 702.35,606.99 Z' fill='url(#pr)'/><circle cx='715.2' cy='620.3' r='18.5' fill='none' stroke='#000' stroke-width='1' shape-rendering='crispEdges'/><path d='M733.70,620.30 L715.2,620.3 L702.35,606.99' fill='none' stroke='#000' stroke-width='1'/><text x='647' y='234' font-family='Liberation Sans' font-weight='bold' font-size='9.2' fill='#000' stroke='#000' stroke-width='0.55' textLength='27' lengthAdjust='spacing'>Peten</text><text x='447' y='423.7' font-family='Liberation Sans' font-weight='bold' font-size='9.2' fill='#000' stroke='#000' stroke-width='0.55' textLength='74.7' lengthAdjust='spacing'>Huehuetenango</text><text x='552.8' y='442.7' font-family='Liberation Sans' font-weight='bold' font-size='9.2' fill='#000' stroke='#000' stroke-width='0.55' textLength='33.1' lengthAdjust='spacing'>Quiche</text><text x='652.9' y='422.8' font-family='Liberation Sans' font-weight='bold' font-size='9.2' fill='#000' stroke='#000' stroke-width='0.55' textLength='63.3' lengthAdjust='spacing'>Alta Verapaz</text><text x='818.6' y='442' font-family='Liberation Sans' font-weight='bold' font-size='9.2' fill='#000' stroke='#000' stroke-width='0.55' textLength='27.6' lengthAdjust='spacing'>Izabal</text><text x='609.7' y='502.2' font-family='Liberation Sans' font-weight='bold' font-size='9.2' fill='#000' stroke='#000' stroke-width='0.55' textLength='64.4' lengthAdjust='spacing'>Baja Verapaz</text><text x='670.9' y='522.6' font-family='Liberation Sans' font-weight='bold' font-size='9.2' fill='#000' stroke='#000' stroke-width='0.55' textLength='55.4' lengthAdjust='spacing'>El Progreso</text><text x='754.7' y='504.8' font-family='Liberation Sans' font-weight='bold' font-size='9.2' fill='#000' stroke='#000' stroke-width='0.55' textLength='35.4' lengthAdjust='spacing'>Zacapa</text><text x='690.2' y='561.3' font-family='Liberation Sans' font-weight='bold' font-size='9.2' fill='#000' stroke='#000' stroke-width='0.55' textLength='32.3' lengthAdjust='spacing'>Jalapa</text><text x='757.9' y='554.9' font-family='Liberation Sans' font-weight='bold' font-size='9.2' fill='#000' stroke='#000' stroke-width='0.55' textLength='54.4' lengthAdjust='spacing'>Chiquimula</text><text x='414.8' y='507.2' font-family='Liberation Sans' font-weight='bold' font-size='9.2' fill='#000' stroke='#000' stroke-width='0.55' textLength='57.4' lengthAdjust='spacing'>San Marcos</text><text x='445' y='520.8' font-family='Liberation Sans' font-weight='bold' font-size='9.2' fill='#000' stroke='#000' stroke-width='0.55' textLength='76.9' lengthAdjust='spacing'>Quetzaltenango</text><text x='514' y='547.7' font-family='Liberation Sans' font-weight='bold' font-size='9.2' fill='#000' stroke='#000' stroke-width='0.55' textLength='28.2' lengthAdjust='spacing'>Solola</text><text x='423.7' y='595.7' font-family='Liberation Sans' font-weight='bold' font-size='9.2' fill='#000' stroke='#000' stroke-width='0.55' textLength='52.7' lengthAdjust='spacing'>Retalhuleu</text><text x='481.9' y='577.6' font-family='Liberation Sans' font-weight='bold' font-size='9.2' fill='#000' stroke='#000' stroke-width='0.55' textLength='71.7' lengthAdjust='spacing'>Suchitepequez</text><text x='540.9' y='626.4' font-family='Liberation Sans' font-weight='bold' font-size='9.2' fill='#000' stroke='#000' stroke-width='0.55' textLength='44.5' lengthAdjust='spacing'>Escuintla</text><text x='612.7' y='552.2' font-family='Liberation Sans' font-weight='bold' font-size='9.2' fill='#000' stroke='#000' stroke-width='0.55' textLength='52.8' lengthAdjust='spacing'>Guatemala</text><text x='634.1' y='625.7' font-family='Liberation Sans' font-weight='bold' font-size='9.2' fill='#000' stroke='#000' stroke-width='0.55' textLength='54.5' lengthAdjust='spacing'>Santa Rosa</text><text x='706.2' y='608.8' font-family='Liberation Sans' font-weight='bold' font-size='9.2' fill='#000' stroke='#000' stroke-width='0.55' textLength='35.7' lengthAdjust='spacing'>Jutiapa</text></g></svg><svg class='a' style='left:0;top:0' width='1024' height='721'><circle cx='7.8' cy='80.6' r='6.3' fill='#b0a880' stroke='#202020' stroke-width='1' stroke-dasharray='1.5,1'/><circle cx='7.8' cy='80.6' r='4.6' fill='#2030ff'/><path d='M4,78 L7,77 L7,83 L5,84 Z' fill='#00ff40'/><path d='M9,78 L10.5,79 L11,83 L9.5,82 Z' fill='#00ff40'/><path d='M4,84 Q8,87 11,84' stroke='#fff' stroke-width='1.3' fill='none'/><path d='M12.5,85 L16.5,89' stroke='#e00000' stroke-width='2'/><rect x='977' y='84' width='6' height='2' fill='#000'/><rect x='994.5' y='77.5' width='5' height='5' fill='none' stroke='#000'/><rect x='994' y='77' width='6' height='2' fill='#000'/><rect x='992.5' y='80.5' width='5' height='5' fill='#c0c0c0' stroke='#000'/><rect x='992' y='80' width='6' height='2' fill='#000'/><path d='M1011.5,78.5 L1018.5,85 M1018.5,78.5 L1011.5,85' stroke='#000' stroke-width='1.6'/><path d='M1009,54.5 L1017,54.5' stroke='#000' stroke-width='1.2'/><path d='M1008,54.5 L1011,51.5 L1011,57.5 Z M1018,54.5 L1015,51.5 L1015,57.5 Z' fill='#000'/><path d='M1012.5,61 L1012.5,67' stroke='#000' stroke-width='1.2'/><path d='M1012.5,60 L1009.5,63 L1015.5,63 Z M1012.5,68.5 L1009.5,65.5 L1015.5,65.5 Z' fill='#000'/><rect x='998.5' y='703.5' width='7' height='6' fill='#c0c0c0' stroke='none'/><rect x='1006.5' y='703.5' width='7' height='6' fill='#c0c0c0' stroke='none'/><rect x='998.5' y='710.5' width='7' height='6' fill='#c0c0c0' stroke='none'/><rect x='1006.5' y='710.5' width='7' height='6' fill='#c0c0c0' stroke='none'/><path d='M998.5,717 L998.5,703.5 L1014,703.5 M1006.5,717 L1006.5,703.5 M998.5,710.5 L1014,710.5' stroke='#fff' fill='none'/><path d='M999,709.5 L1006,709.5 L1006,704 M1007,709.5 L1014,709.5 L1014,704 M999,716.5 L1006,716.5 L1006,711 M1007,716.5 L1014,716.5 L1014,711' stroke='#808080' fill='none'/><path d='M315.5,270 L315.5,283' stroke='#fff' stroke-width='3'/><path d='M315.5,270 L315.5,283' stroke='#000' stroke-width='1'/><path d='M307.5,276.5 L311.5,272.5 L311.5,275 L314,275 L314,278 L311.5,278 L311.5,280.5 Z' fill='#000' stroke='#fff' stroke-width='0.7'/><path d='M323.5,276.5 L319.5,272.5 L319.5,275 L317,275 L317,278 L319.5,278 L319.5,280.5 Z' fill='#000' stroke='#fff' stroke-width='0.7'/></svg></body></html>
